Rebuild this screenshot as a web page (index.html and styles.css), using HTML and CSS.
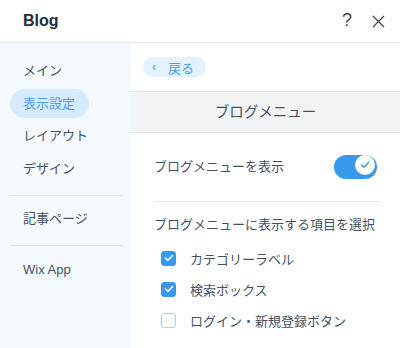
FILE: index.html
```html
<!DOCTYPE html>
<html lang="ja">
<head>
  <meta charset="UTF-8" />
  <title>Blog</title>
  <link rel="stylesheet" href="styles.css">
</head>
<body>
  <div class="panel">
    <header class="topbar">
      <h1>Blog</h1>
      <div class="top-actions">
        <span class="help">?</span>
        <svg class="close" width="13" height="13" viewBox="0 0 13 13">
          <path d="M1 1 L12 12 M12 1 L1 12" stroke="#3b4757" stroke-width="1.3" fill="none"/>
        </svg>
      </div>
    </header>

    <div class="body">
      <nav class="sidebar">
        <a class="nav-item">メイン</a>
        <a class="nav-item active">表示設定</a>
        <a class="nav-item">レイアウト</a>
        <a class="nav-item">デザイン</a>
        <hr class="nav-sep">
        <a class="nav-item">記事ページ</a>
        <hr class="nav-sep">
        <a class="nav-item">Wix App</a>
      </nav>

      <main class="content">
        <div class="back-row">
          <button class="back-btn"><span class="chev">‹</span>戻る</button>
        </div>
        <div class="section-title">ブログメニュー</div>

        <div class="settings">
          <div class="toggle-row">
            <span>ブログメニューを表示</span>
            <span class="toggle">
              <span class="knob">
                <svg width="10" height="8" viewBox="0 0 10 8">
                  <path d="M1.5 4 L4 6.3 L8.5 1.5" stroke="#3899ec" stroke-width="1.4" fill="none" stroke-linecap="round" stroke-linejoin="round"/>
                </svg>
              </span>
            </span>
          </div>
          <hr class="sep">
          <p class="group-label">ブログメニューに表示する項目を選択</p>
          <ul class="checks">
            <li><span class="box checked"><svg width="10" height="8" viewBox="0 0 10 8"><path d="M1.5 4 L4 6.3 L8.5 1.5" stroke="#fff" stroke-width="1.6" fill="none" stroke-linecap="round" stroke-linejoin="round"/></svg></span>カテゴリーラベル</li>
            <li><span class="box checked"><svg width="10" height="8" viewBox="0 0 10 8"><path d="M1.5 4 L4 6.3 L8.5 1.5" stroke="#fff" stroke-width="1.6" fill="none" stroke-linecap="round" stroke-linejoin="round"/></svg></span>検索ボックス</li>
            <li><span class="box"></span>ログイン・新規登録ボタン</li>
          </ul>
        </div>
      </main>
    </div>
  </div>
</body>
</html>
```

FILE: styles.css
```css
body {
  margin: 0;
  font-family: 'Liberation Sans', 'Noto Sans CJK JP', sans-serif;
  color: #435262;
  background: #fff;
}

.panel {
  width: 400px;
  height: 348px;
  display: flex;
  flex-direction: column;
  overflow: hidden;
}

.topbar {
  height: 42px;
  flex: none;
  display: flex;
  align-items: center;
  justify-content: space-between;
  padding: 0 15px 0 23px;
  border-bottom: 1px solid #e3e9ef;
}

.topbar h1 {
  margin: 0;
  font-size: 16px;
  font-weight: bold;
  color: #20303c;
}

.top-actions {
  display: flex;
  align-items: center;
  gap: 20px;
}

.help {
  font-size: 18px;
  line-height: 18px;
  color: #3b4757;
  font-family: 'Liberation Sans', sans-serif;
  position: relative;
  top: -1px;
}

.close {
  display: block;
}

.body {
  flex: 1;
  display: flex;
  min-height: 0;
}

.sidebar {
  width: 131px;
  flex: none;
  box-sizing: border-box;
  background: #f4f9fe;
  padding: 13px 9px 0 10px;
  display: flex;
  flex-direction: column;
  align-items: flex-start;
  gap: 3.5px;
}

.nav-item {
  height: 29px;
  line-height: 29px;
  padding: 0 14px 0 13px;
  border-radius: 15px;
  font-size: 13px;
  color: #435262;
  cursor: pointer;
}

.nav-item.active {
  background: #d6ebfd;
  color: #4a9ee9;
}

.nav-sep {
  align-self: stretch;
  border: none;
  border-top: 1px solid #d8e9f8;
  margin: 8.5px 0 5px;
}

.content {
  flex: 1;
  display: flex;
  flex-direction: column;
}

.back-row {
  padding: 14px 0 14px 12px;
}

.back-btn {
  height: 20px;
  width: 63px;
  border: none;
  border-radius: 10px;
  background: #e4f2fe;
  color: #4a9ee9;
  font-family: inherit;
  font-size: 13px;
  padding: 0 0 0 9px;
  display: flex;
  align-items: center;
  cursor: pointer;
}

.chev {
  font-size: 12px;
  margin-right: 12px;
}

.section-title {
  height: 40px;
  line-height: 40px;
  text-align: center;
  background: #f2f3f5;
  border-top: 1px solid #dfe5eb;
  border-bottom: 1px solid #dfe5eb;
  font-size: 14.5px;
  color: #435262;
}

.settings {
  padding: 22px 19px 0 23px;
}

.toggle-row {
  display: flex;
  align-items: center;
  justify-content: space-between;
  height: 24px;
  font-size: 13px;
}

.toggle-row span:first-child {
  position: relative;
  top: -2px;
}

.toggle {
  width: 43px;
  height: 24px;
  margin-right: 4px;
  border-radius: 12px;
  background: #3899ec;
  display: flex;
  align-items: center;
  justify-content: flex-end;
  padding-right: 2px;
  box-sizing: border-box;
}

.knob {
  width: 20px;
  height: 20px;
  border-radius: 50%;
  background: #fff;
  display: flex;
  align-items: center;
  justify-content: center;
}

.sep {
  border: none;
  border-top: 1px solid #dfe5eb;
  margin: 22px 0 0;
}

.group-label {
  margin: 14px 0 0;
  font-size: 13px;
  line-height: 18px;
}

.checks {
  list-style: none;
  margin: 8.5px 0 0;
  padding: 0 0 0 7px;
}

.checks li {
  display: flex;
  align-items: center;
  height: 31px;
  font-size: 13px;
}

.box {
  width: 15px;
  height: 15px;
  box-sizing: border-box;
  border-radius: 3px;
  border: 1.5px solid #a9d2f7;
  background: #fff;
  margin-right: 14px;
  display: flex;
  align-items: center;
  justify-content: center;
}

.box.checked {
  background: #3899ec;
  border-color: #3899ec;
}
```
